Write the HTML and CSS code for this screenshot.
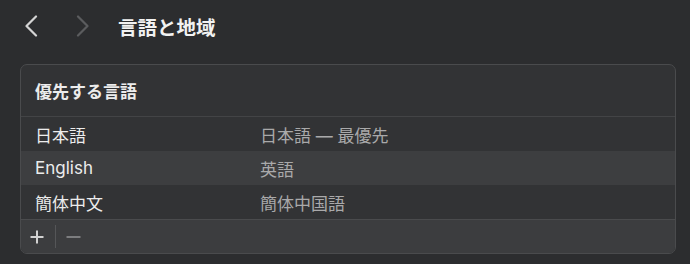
FILE: index.html
```html
<!DOCTYPE html>
<html lang="ja">

<head>
    <meta charset="UTF-8">
    <title>言語と地域</title>
    <link rel="stylesheet" href="styles.css">
</head>

<body>
    <!-- Barra de título -->
    <header class="toolbar">
        <span class="nav-btn">
            <svg width="14" height="22" viewBox="0 0 14 22"><path d="M12 1.5 L2.5 11 L12 20.5" fill="none" stroke="#d4d4d4" stroke-width="2.2" stroke-linecap="round" stroke-linejoin="round"/></svg>
        </span>
        <span class="nav-btn fwd">
            <svg width="14" height="22" viewBox="0 0 14 22"><path d="M2 1.5 L11.5 11 L2 20.5" fill="none" stroke="#5b5c5e" stroke-width="2.2" stroke-linecap="round" stroke-linejoin="round"/></svg>
        </span>
        <h1>言語と地域</h1>
    </header>

    <!-- Panel de idiomas -->
    <section class="panel">
        <div class="panel-head">優先する言語</div>
        <div class="row">
            <span class="name">日本語</span>
            <span class="detail">日本語 — 最優先</span>
        </div>
        <div class="row alt">
            <span class="name">English</span>
            <span class="detail">英語</span>
        </div>
        <div class="row">
            <span class="name">簡体中文</span>
            <span class="detail">簡体中国語</span>
        </div>
        <div class="panel-foot">
            <span class="tool">
                <svg width="14" height="14" viewBox="0 0 14 14"><path d="M7 0.5 V13.5 M0.5 7 H13.5" stroke="#d2d2d2" stroke-width="2"/></svg>
            </span>
            <span class="divider"></span>
            <span class="tool">
                <svg width="15" height="14" viewBox="0 0 15 14"><path d="M0.5 7 H14.5" stroke="#7c7d7f" stroke-width="2"/></svg>
            </span>
        </div>
    </section>
</body>

</html>
```
FILE: styles.css
```css
body {
    margin: 0;
    background: #2c2d2f;
    color: #ececec;
    font-family: 'Inter', 'Noto Sans CJK JP', sans-serif;
    width: 690px;
    height: 264px;
    overflow: hidden;
}

.toolbar {
    display: flex;
    align-items: center;
    height: 52px;
    padding-left: 24px;
}

.nav-btn {
    display: flex;
    width: 14px;
    height: 22px;
    margin-right: 38px;
}

.nav-btn.fwd {
    margin-right: 28px;
}

.toolbar h1 {
    margin: 0;
    font-size: 19.5px;
    font-weight: bold;
    color: #f2f2f2;
}

.panel {
    margin: 12px 0 0 20px;
    width: 654px;
    border: 1px solid #4a4b4d;
    border-radius: 7px;
    background: #323335;
    overflow: hidden;
}

.panel-head {
    height: 51px;
    display: flex;
    align-items: center;
    padding-left: 14px;
    font-size: 17px;
    font-weight: bold;
    border-bottom: 1px solid #434446;
}

.row {
    display: grid;
    grid-template-columns: 225px 1fr;
    align-items: center;
    height: 34px;
    padding-left: 14px;
    font-size: 17px;
}

.row.alt {
    background: #3d3e40;
}

.row .detail {
    color: #a9a9aa;
}

.panel-foot {
    display: flex;
    align-items: center;
    height: 33px;
    border-top: 1px solid #4a4b4d;
    background: #3c3d3f;
    padding-left: 9px;
}

.tool {
    display: flex;
}

.divider {
    width: 1px;
    height: 23px;
    background: #555658;
    margin: 0 10px 0 11px;
}
```
